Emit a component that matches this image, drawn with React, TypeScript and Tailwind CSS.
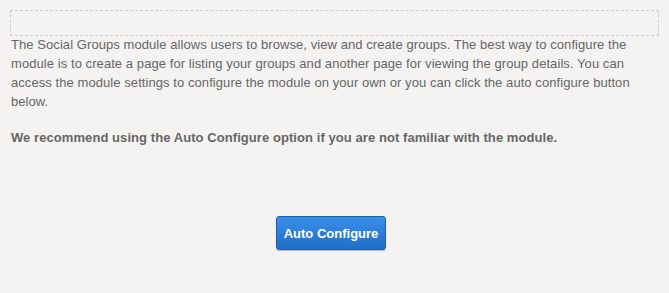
export default function App() {
  return (
    <div className="min-h-screen bg-[#f5f3f1] p-[10px] font-['Liberation_Sans',Arial,sans-serif] text-[13px] leading-[19px] tracking-[0.07px] text-[#666]">
      {/* placeholder pane */}
      <div className="h-[26px] border border-dashed border-[#ccc]" />

      <div className="-mt-px pl-px">
        <p>
          The Social Groups module allows users to browse, view and create groups. The best way to configure the
          module is to create a page for listing your groups and another page for viewing the group details. You can
          access the module settings to configure the module on your own or you can click the auto configure button
          below.
        </p>
        <p className="mt-[17px] font-bold">
          We recommend using the Auto Configure option if you are not familiar with the module.
        </p>
      </div>

      <div className="mt-[69px] flex justify-center pr-[7px]">
        <button className="h-[34px] w-[110px] rounded-[3px] border border-[#1b5fae] bg-gradient-to-b from-[#3b8fe8] to-[#1f6dc7] text-[13px] font-bold tracking-normal text-white shadow-[0_1px_1px_rgba(0,0,0,0.25)]">
          Auto Configure
        </button>
      </div>
    </div>
  );
}
